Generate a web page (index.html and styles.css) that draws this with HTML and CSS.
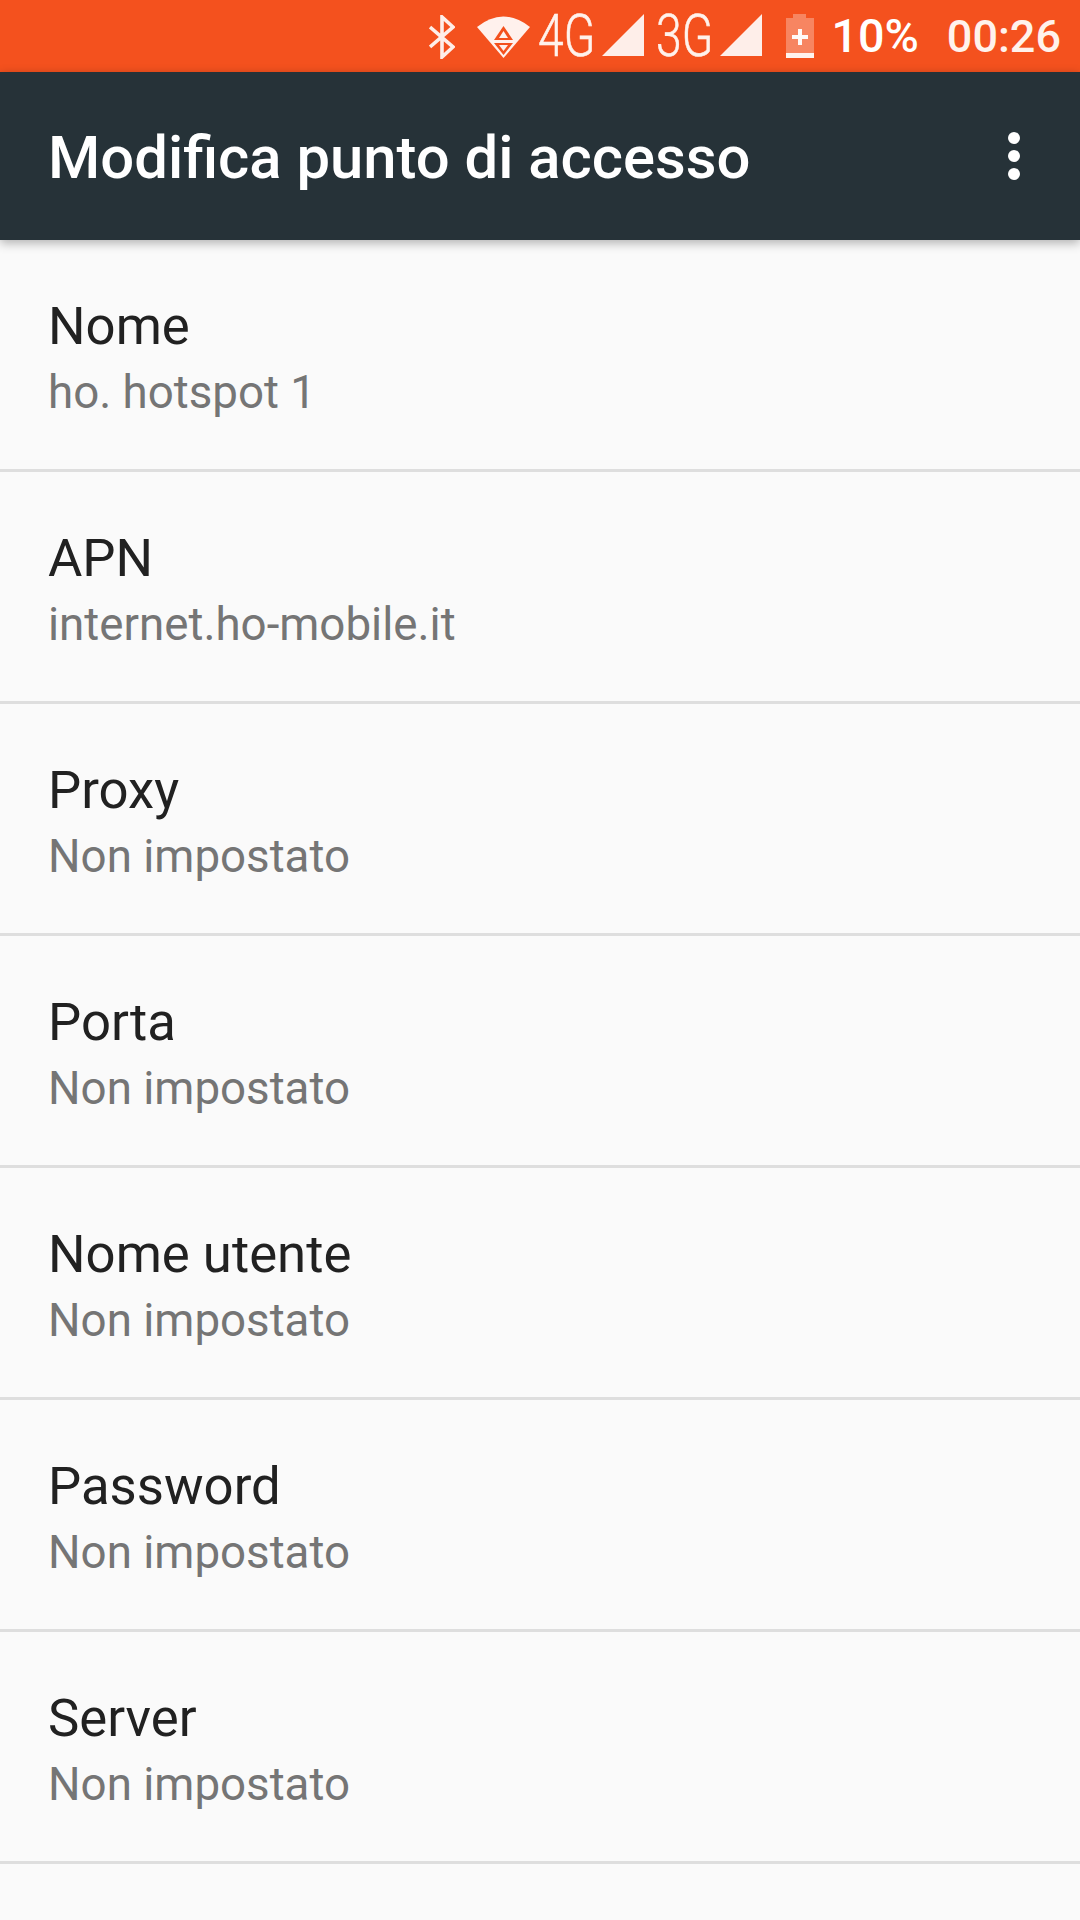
FILE: index.html
```html
<!DOCTYPE html>
<html lang="en">
<head>
    <meta charset="UTF-8">
    <meta name="viewport" content="width=device-width, initial-scale=1.0">
    <title>Modifica punto di accesso</title>
    <link rel="stylesheet" href="styles.css">
</head>
<body>
    <!-- Status bar -->
    <div class="statusbar">
        <svg class="ic-bt" width="26" height="44" viewBox="0 0 26 44">
            <path d="M1 12 L24 32 L13 42 L13 2 L24 12 L1 32" fill="none" stroke="#fff" stroke-opacity="0.9" stroke-width="3.6"/>
        </svg>
        <svg class="ic-wifi" width="53" height="44" viewBox="0 0 53 44">
            <path d="M0 13 Q26 -8 53 13 L26.5 44 Z" fill="#fff" fill-opacity="0.92"/>
            <path d="M26.5 12 L36 26 L17 26 Z" fill="#f4511e"/>
            <path d="M26.5 17 L31 24 L22 24 Z" fill="#fff" fill-opacity="0.92"/>
            <path d="M17 29 L36 29 L26.5 41 Z" fill="#f4511e"/>
            <path d="M22 31 L31 31 L26.5 37 Z" fill="#fff" fill-opacity="0.92"/>
        </svg>
        <span class="net net-4g">4G</span>
        <svg class="ic-signal" width="42" height="42" viewBox="0 0 42 42">
            <path d="M42 0 L42 42 L0 42 Z" fill="#fff" fill-opacity="0.9"/>
        </svg>
        <span class="net net-3g">3G</span>
        <svg class="ic-signal" width="42" height="42" viewBox="0 0 42 42">
            <path d="M42 0 L42 42 L0 42 Z" fill="#fff" fill-opacity="0.9"/>
        </svg>
        <svg class="ic-batt" width="28" height="44" viewBox="0 0 28 44">
            <path d="M7 0 H20 V4 H28 V44 H0 V4 H7 Z" fill="#fff" fill-opacity="0.3"/>
            <rect x="0" y="39" width="28" height="5" fill="#fff" fill-opacity="0.9"/>
            <path d="M12 15 H16 V21 H22 V25 H16 V31 H12 V25 H6 V21 H12 Z" fill="#fff" fill-opacity="0.95"/>
        </svg>
        <span class="level">10%</span>
        <span class="clock">00:26</span>
    </div>

    <!-- Toolbar -->
    <header class="toolbar">
        <div class="toolbar-title">Modifica punto di accesso</div>
        <div class="overflow-btn">
            <span class="dot"></span>
            <span class="dot"></span>
            <span class="dot"></span>
        </div>
    </header>

    <!-- Preference list -->
    <ul class="prefs">
        <li><div class="pref-title">Nome</div><div class="pref-value">ho. hotspot 1</div></li>
        <li><div class="pref-title">APN</div><div class="pref-value">internet.ho-mobile.it</div></li>
        <li><div class="pref-title">Proxy</div><div class="pref-value">Non impostato</div></li>
        <li><div class="pref-title">Porta</div><div class="pref-value">Non impostato</div></li>
        <li><div class="pref-title">Nome utente</div><div class="pref-value">Non impostato</div></li>
        <li><div class="pref-title">Password</div><div class="pref-value">Non impostato</div></li>
        <li><div class="pref-title">Server</div><div class="pref-value">Non impostato</div></li>
    </ul>
</body>
</html>
```

FILE: styles.css
```css
html, body{
    margin: 0;
    height: 100%;
    overflow: hidden;
    background-color: #fafafa;
    font-family: Roboto, "Noto Sans", sans-serif;
}
.statusbar{
    display: flex;
    align-items: center;
    justify-content: flex-end;
    height: 72px;
    padding-right: 19px;
    box-sizing: border-box;
    background-color: #f4511e;
    color: #fff;
}
.ic-bt{
    margin-right: 22px;
    margin-top: 2px;
}
.ic-wifi{
    margin-right: 8px;
    margin-top: -1px;
}
.net{
    width: 56px;
    font-size: 60px;
    font-weight: 300;
    -webkit-text-stroke: 0.6px #fff2ec;
    line-height: 72px;
    color: #fff2ec;
    transform: scaleX(0.77);
    transform-origin: left center;
    white-space: nowrap;
}
.net-3g{
    margin-left: 12px;
}
.ic-signal{
    margin-left: 8px;
    margin-top: -2px;
}
.ic-batt{
    margin-left: 24px;
}
.level{
    margin-left: 17px;
    font-size: 46.7px;
    font-weight: 500;
}
.clock{
    margin-left: 28px;
    font-size: 45px;
    font-weight: 500;
    color: #fff2ec;
}
.toolbar{
    position: relative;
    display: flex;
    align-items: center;
    justify-content: space-between;
    height: 168px;
    padding-left: 48px;
    background-color: #263238;
    box-shadow: 0 3px 10px rgba(0, 0, 0, 0.3);
}
.toolbar-title{
    margin-top: 3px;
    font-size: 59.8px;
    font-weight: 500;
    color: #fff;
}
.overflow-btn{
    display: flex;
    flex-direction: column;
    gap: 6px;
    margin-right: 60px;
}
.dot{
    width: 12px;
    height: 12px;
    border-radius: 50%;
    background-color: #fff;
}
.prefs{
    margin: 0;
    padding: 0;
    list-style: none;
}
.prefs li{
    height: 232px;
    box-sizing: border-box;
    padding: 55px 48px 0;
    border-bottom: 3px solid #dedede;
}
.pref-title{
    font-size: 52.7px;
    line-height: 62px;
    color: #212121;
}
.pref-value{
    margin-top: 5px;
    font-size: 45.7px;
    line-height: 62px;
    color: #757575;
}
```
